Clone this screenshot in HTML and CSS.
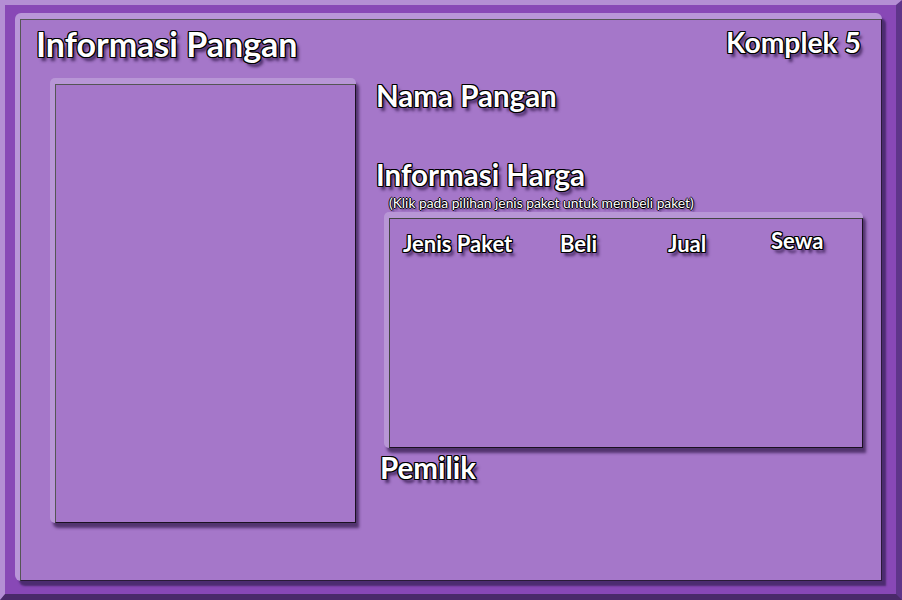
FILE: index.html
```html
<!DOCTYPE html>
<html lang="id">
<head>
<meta charset="utf-8">
<title>Informasi Pangan</title>
<link rel="stylesheet" href="styles.css">
</head>
<body>
<div class="frame">
  <div class="panel">
    <div class="panel-in">
      <header class="top">
        <h1 class="title outline">Informasi Pangan</h1>
        <div class="komplek outline">Komplek 5</div>
      </header>
      <div class="body">
        <div class="bevel photo-wrap">
          <div class="photo"></div>
        </div>
        <div class="info">
          <h2 class="heading outline nama">Nama Pangan</h2>
          <h2 class="heading outline harga">Informasi Harga</h2>
          <p class="note outline-thin">(Klik pada pilihan jenis paket untuk membeli paket)</p>
          <div class="bevel table-wrap">
            <div class="table">
              <div class="cols">
                <span class="col outline">Jenis Paket</span>
                <span class="col outline">Beli</span>
                <span class="col outline">Jual</span>
                <span class="col outline raised">Sewa</span>
              </div>
            </div>
          </div>
          <h2 class="heading outline pemilik">Pemilik</h2>
        </div>
      </div>
    </div>
  </div>
</div>
</body>
</html>
```

FILE: styles.css
```css
html, body {
  margin: 0;
  padding: 0;
  background: #8747b5;
}

.frame {
  width: 902px;
  height: 600px;
  box-sizing: border-box;
  background: #8848b6;
  border-top: 5px solid #b48ed4;
  border-left: 5px solid #b48ed4;
  border-right: 6px solid #5f358a;
  border-bottom: 6px solid #4a2a6a;
  padding: 8px 0 0 10px;
}

.panel {
  width: 867px;
  box-sizing: border-box;
  background: #b996d8;
  padding: 6px 0 0 5px;
  border-radius: 6px 6px 0 6px;
  box-shadow: 4px 5px 2px #4c2c70;
}

.panel-in {
  height: 562px;
  box-sizing: border-box;
  background: #a577c9;
  border: 1px solid #2a1a38;
  border-top-color: #555;
  border-left-color: #555;
  padding: 4px 20px 0 0;
  font-family: "Lato", "Open Sans", sans-serif;
  font-weight: 700;
  color: #fff;
}

.outline {
  text-shadow:
    1px 0 0 #000, -1px 0 0 #000, 0 1px 0 #000, 0 -1px 0 #000,
    1px 1px 0 #000, -1px -1px 0 #000, 1px -1px 0 #000, -1px 1px 0 #000,
    3px 4px 3px rgba(45, 20, 70, 0.75);
}

.outline-thin {
  text-shadow:
    1px 0 0 #000, -1px 0 0 #000, 0 1px 0 #000, 0 -1px 0 #000,
    2px 2px 2px rgba(45, 20, 70, 0.7);
}

.top {
  display: flex;
  justify-content: space-between;
  align-items: flex-start;
}

.title {
  margin: 0 0 0 15px;
  font-size: 34px;
  line-height: 40px;
  font-weight: 700;
}

.komplek {
  font-size: 28.3px;
  line-height: 32px;
  margin-top: 2px;
}

.body {
  display: flex;
  margin-top: 14px;
  padding-left: 29px;
  gap: 20px;
}

.bevel {
  background: #b896d6;
  padding: 6px 0 0 5px;
  border-radius: 5px 5px 0 5px;
  box-shadow: 3px 5px 3px rgba(55, 30, 80, 0.75);
}

.photo-wrap {
  flex: none;
  width: 306px;
  box-sizing: border-box;
  height: 445px;
}

.photo {
  height: 439px;
  box-sizing: border-box;
  background: #a577c9;
  border: 1px solid #1a1020;
  border-top-color: #555;
  border-left-color: #555;
}

.info {
  flex: none;
  display: flex;
  flex-direction: column;
  align-items: flex-start;
}

.heading {
  margin: 0;
  font-size: 29.5px;
  line-height: 32px;
  font-weight: 700;
}

.nama {
  margin-top: 2px;
}

.harga {
  margin-top: 47px;
}

.note {
  margin: 4px 0 0 13px;
  font-size: 13.8px;
  line-height: 15px;
  font-weight: 400;
}

.table-wrap {
  margin: 2px 0 0 8px;
  width: 479px;
  box-sizing: border-box;
}

.table {
  height: 230px;
  box-sizing: border-box;
  background: #a577c9;
  border: 1px solid #1a1020;
  border-top-color: #444;
  border-left-color: #444;
  padding: 12px 0 0 13px;
}

.cols {
  display: grid;
  grid-template-columns: 157px 108px 103px auto;
  align-items: start;
}

.col {
  font-size: 22px;
  line-height: 26px;
}

.raised {
  margin-top: -3px;
}

.pemilik {
  margin: 4px 0 0 4px;
}
```
